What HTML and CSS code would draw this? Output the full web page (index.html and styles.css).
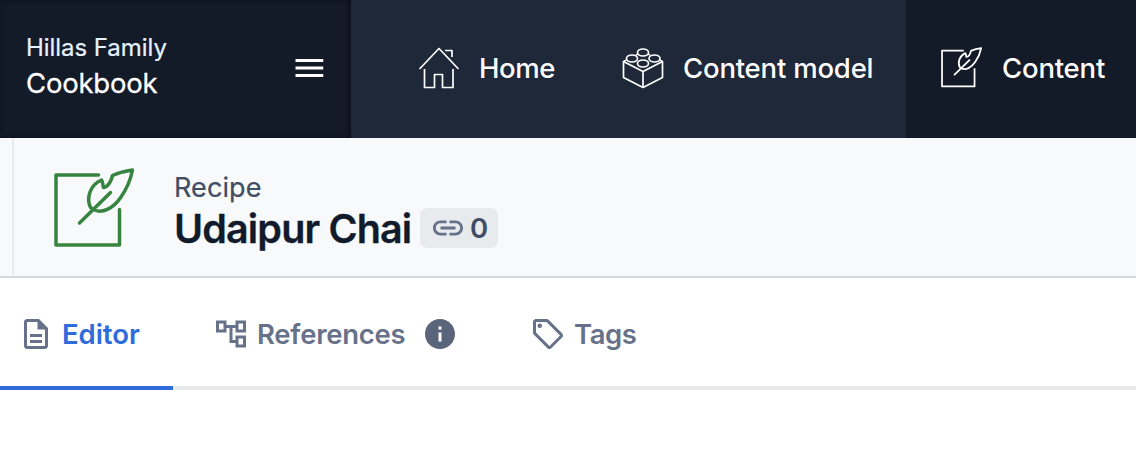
FILE: index.html
```html
<!DOCTYPE html>
<html lang="en">
<head>
<meta charset="utf-8">
<title>Udaipur Chai</title>
<link rel="stylesheet" href="styles.css">
</head>
<body>
<header class="topbar">
  <div class="space">
    <div class="space-names"><span class="org">Hillas Family</span><span class="project">Cookbook</span></div>
    <svg class="icon menu" viewBox="0 0 24 24"><path d="M3 18h18.500v-2H3v2zm0-5h18.500v-2H3v2zm0-7v2h18.500V6H3z"/></svg>
  </div>
  <nav class="nav">
    <a class="nav-item home"><svg class="nav-icon" viewBox="0 0 42 42"><path d="M1.500 22 21 1.500 40.500 22M6.500 22v18.500h10V27.500h8v13h10.500V22M27 3.500h7v6.500"/></svg><span class="nav-label">Home</span></a>
    <a class="nav-item model"><svg class="nav-icon" viewBox="0 0 42 42"><path d="M4.500 13 1.500 14.500v16L21 40.500 40.500 30.500v-16L37.500 13M1.500 14.500 21 24.500l19.500-10M21 24.500v16M14 8l2-1M26 7l2 1"/><ellipse cx="21" cy="5.500" rx="5.500" ry="3.500"/><ellipse cx="10" cy="11.500" rx="5.500" ry="3.500"/><ellipse cx="32.500" cy="11.500" rx="5.500" ry="3.500"/><ellipse cx="21" cy="16.500" rx="5.500" ry="3.500"/></svg><span class="nav-label">Content model</span></a>
  </nav>
  <a class="nav-item content"><svg class="nav-icon" viewBox="0 0 82 82"><use href="#quill"/></svg><span class="nav-label">Content</span></a>
</header>
<section class="entry">
  <div class="entry-inner">
    <svg class="entry-icon" viewBox="0 0 82 82"><g id="quill"><path d="M44.500 7H2v70h63.500V41.500"/><path d="M25.500 55 56.500 24.500M47.500 12C36 17 32 30 36.500 39.500 48 49 61 38 67 29 74 19 77.500 7 78.500 2 71 3 64 5 58.500 7.500 57.500 12 54.500 19 49.500 19.500 48.500 17 49.500 15 47.500 12z"/></g></svg>
    <div class="entry-text">
      <span class="type">Recipe</span>
      <div class="title-row"><h1 class="title">Udaipur Chai</h1><span class="links"><svg class="icon" viewBox="0 0 24 24"><path d="M3.900 12c0-1.710 1.390-3.100 3.100-3.100h4V7H7c-2.760 0-5 2.240-5 5s2.240 5 5 5h4v-1.900H7c-1.710 0-3.100-1.390-3.100-3.100zM7 13h10v-2H7v2zm10-6h-4v1.900h4c1.710 0 3.100 1.390 3.100 3.100s-1.390 3.100-3.100 3.100h-4V17h4c2.760 0 5-2.240 5-5s-2.240-5-5-5z"/></svg><span class="count">0</span></span></div>
    </div>
  </div>
</section>
<nav class="tabs">
  <a class="tab editor"><svg class="icon" viewBox="0 0 24 24"><path d="M14 2H6c-1.100 0-2 .9-2 2v16c0 1.100.9 2 2 2h12c1.100 0 2-.9 2-2V8l-6-6zM6 20V4h7v5h5v11H6zm2-8h8v2H8zm0 4h8v2H8z"/></svg><span class="editor-label">Editor</span></a>
  <a class="tab references"><svg class="icon" viewBox="0 0 24 24"><path d="M22 11V3h-7v3H9V3H2v8h7V8h2v10h4v3h7v-8h-7v3h-2V8h2v3h7zM7 9H4V5h3v4zm10 6h3v4h-3v-4zm0-10h3v4h-3V5z"/></svg><span class="references-label">References</span><svg class="icon info" viewBox="0 0 24 24"><path d="M12 2C6.480 2 2 6.480 2 12s4.480 10 10 10 10-4.480 10-10S17.520 2 12 2zm1 15h-2v-6h2v6zm0-8h-2V7h2v2z"/></svg></a>
  <a class="tab tags"><svg class="icon" viewBox="0 0 24 24"><path d="M21.410 11.580l-9-9C12.050 2.220 11.550 2 11 2H4c-1.100 0-2 .9-2 2v7c0 .55.220 1.050.590 1.420l9 9c.36.360.860.580 1.410.580s1.050-.220 1.410-.590l7-7c.370-.360.590-.860.590-1.410s-.230-1.060-.590-1.420zM13 20.010L4 11V4h7v-.010l9 9-7 7.020z"/><circle cx="6.500" cy="6.500" r="1.500"/></svg><span class="tags-label">Tags</span></a>
</nav>
</body>
</html>
```
FILE: styles.css
```css
* { box-sizing: border-box; }
body { margin: 0; height: 450px; overflow: hidden; background: #fff; font-family: Inter, "Liberation Sans", sans-serif; }
span, h1 { white-space: nowrap; }
.icon { width: 36px; height: 36px; flex: none; fill: currentColor; }
.topbar { display: flex; height: 138px; color: #fff; background: #131b29; }
.space { display: flex; align-items: center; justify-content: space-between; width: 351px; padding: 0 24px 2px 26px; box-shadow: inset -2px 0 5px #0a0f1a; }
.space-names { display: flex; flex-direction: column; gap: 1px; padding-bottom: 5px; }
.org { font-size: 24px; line-height: 34px; color: #e7f2ff; letter-spacing: -.05px; -webkit-text-stroke: .2px currentColor; }
.project { font-size: 27.500px; line-height: 34px; letter-spacing: -.2px; -webkit-text-stroke: .3px currentColor; }
.nav { display: flex; width: 555px; background: #1e2838; }
.nav-item { display: flex; align-items: center; padding-bottom: 2px; font-size: 27.500px; font-weight: 500; letter-spacing: -.2px; }
.nav-icon { width: 42px; height: 42px; flex: none; fill: none; stroke: #fff; stroke-width: 1.700px; stroke-linejoin: round; }
.nav-label { line-height: 34px; }
.home { width: 203px; padding-left: 67px; gap: 19px; letter-spacing: -.4px; }
.model { padding-left: 68px; gap: 19px; }
.content { padding-left: 35px; gap: 19px; }
.content .nav-icon { stroke-width: 3.400px; }
.entry { height: 140px; padding-left: 12px; border-bottom: 2px solid #cfd9e0; background: #f7f9fb; }
.entry-inner { display: flex; align-items: flex-start; height: 137px; padding: 30px 0 0 40px; border-left: 2px solid #e7ebee; }
.entry-icon { width: 82px; height: 82px; fill: none; stroke: #378440; stroke-width: 3.500px; stroke-linejoin: round; stroke-linecap: round; }
.entry-text { display: flex; flex-direction: column; padding-left: 38px; }
.type { font-size: 27px; line-height: 40px; color: #414d63; letter-spacing: .1px; -webkit-text-stroke: .2px currentColor; }
.title-row { display: flex; align-items: center; height: 44px; margin-top: -2px; }
.title { margin: 0; width: 246px; padding-top: 2px; font-size: 39.500px; line-height: 44px; font-weight: 600; letter-spacing: -.85px; color: #111b2b; -webkit-text-stroke: .3px currentColor; }
.links { display: flex; align-items: center; width: 78px; height: 40px; padding-left: 10px; gap: 4px; border-radius: 8px; background: #e7ebee; color: #67728a; }
.count { font-size: 27.500px; line-height: 34px; padding-bottom: 1px; font-weight: 600; color: #414d63; }
.tabs { display: flex; height: 112px; border-bottom: 4px solid #e7ebee; color: #67728a; }
.tab { display: flex; align-items: center; height: 112px; font-size: 27.500px; font-weight: 600; letter-spacing: -.05px; }
.editor { width: 173px; padding-left: 18px; gap: 8px; border-bottom: 4px solid #2e6cdb; padding-top: 4px; }
.editor-label { color: #2e6cdb; }
.references { width: 357px; padding-left: 40px; gap: 8px; letter-spacing: -.25px; }
.info { margin-left: auto; margin-right: 72px; color: #5a657c; }
.tags { gap: 8px; letter-spacing: -.5px; }
```
